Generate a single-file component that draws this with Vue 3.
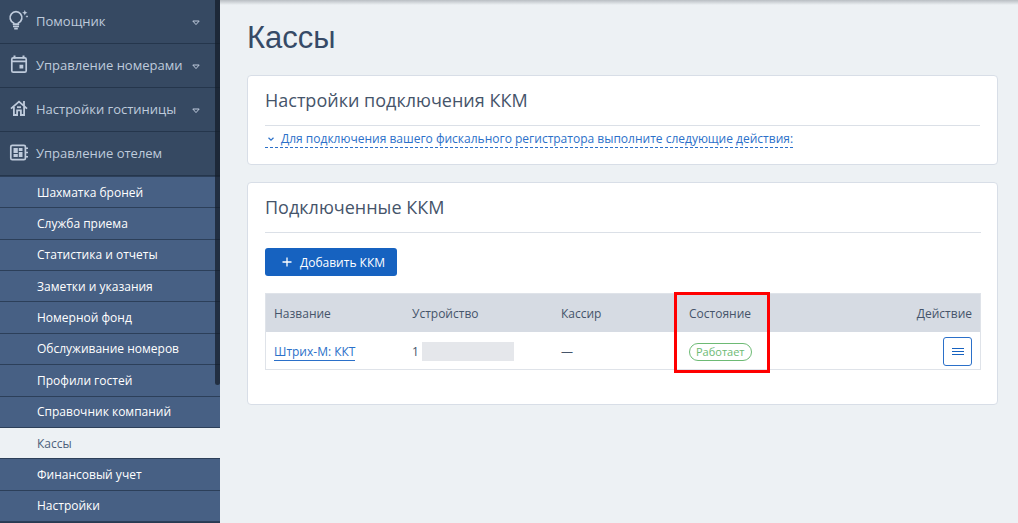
<script setup>
const sections = [
  { icon: 'bulb', label: 'Помощник', arrow: true },
  { icon: 'calendar', label: 'Управление номерами', arrow: true },
  { icon: 'house', label: 'Настройки гостиницы', arrow: true },
  { icon: 'board', label: 'Управление отелем', arrow: false },
]
const items = [
  'Шахматка броней',
  'Служба приема',
  'Статистика и отчеты',
  'Заметки и указания',
  'Номерной фонд',
  'Обслуживание номеров',
  'Профили гостей',
  'Справочник компаний',
  'Кассы',
  'Финансовый учет',
  'Настройки',
]
const current = 'Кассы'
</script>

<template>
  <div class="app">
    <nav class="sidebar">
      <button v-for="s in sections" :key="s.label" class="section" type="button">
        <svg class="icon" viewBox="0 0 22 22" aria-hidden="true">
          <g v-if="s.icon === 'bulb'" fill="none" stroke="currentColor" stroke-width="1.7">
            <path d="M7.600 14.200v-1.200a5.900 5.900 0 1 1 4.800 0v1.200z" />
            <path d="M7 16.400h6M8.200 18.600h3.600" />
            <path d="M18.800 0l.8 1.900 1.900.8-1.900.8-.8 1.900-.8-1.900-1.900-.8 1.900-.8zM21 5l.4 1.100 1.100.4-1.100.4-.4 1.100-.4-1.100-1.100-.4 1.100-.4z" fill="currentColor" stroke="none" />
          </g>
          <g v-else-if="s.icon === 'calendar'">
            <rect x="5.800" y="3.800" width="14.400" height="14.400" rx="1.500" fill="none" stroke="currentColor" stroke-width="1.700" />
            <path d="M5.500 6.500h15v1.700h-15zM7.500 1.500h2v3h-2zM16.500 1.500h2v3h-2zM13.500 10.800h3.800v3.800h-3.800z" fill="currentColor" />
          </g>
          <g v-else-if="s.icon === 'house'" fill="none" stroke="currentColor" stroke-width="1.800">
            <path d="M5 10.700 13 3.600l8 7.100" />
            <path d="M7.900 9v8h3.200v-4.700h3.800V17h3.200V9M18 8.500V3" />
            <path d="M11 9.200h4" />
          </g>
          <g v-else>
            <rect x="4.800" y="3.300" width="14.600" height="14.400" rx="1.500" fill="none" stroke="currentColor" stroke-width="1.700" />
            <path d="M7.500 6h4.300v5H7.500zM7.500 12h4.300v3H7.500zM12.800 6h3.700v3h-3.700zM12.800 10h3.700v5h-3.700zM19.500 5.500H22V7h-2.500zM19.500 9.700H22v1.500h-2.500zM19.500 14H22v1.500h-2.500z" fill="currentColor" />
          </g>
        </svg>
        <span class="section-label">{{ s.label }}</span>
        <svg v-if="s.arrow" class="arrow" viewBox="0 0 8 6" aria-hidden="true">
          <path d="M.8 1h6.400L4 4.600z" fill="none" stroke="currentColor" stroke-width="1" />
        </svg>
      </button>
      <ul class="menu">
        <li v-for="item in items" :key="item">
          <a href="#" :class="{ active: item === current }">{{ item }}</a>
        </li>
      </ul>
      <div class="scrollbar"></div>
    </nav>

    <main class="content">
      <h1>Кассы</h1>

      <section class="card settings">
        <h2>Настройки подключения ККМ</h2>
        <a class="toggle" href="#">
          <svg class="chevron" viewBox="0 0 8 8" aria-hidden="true">
            <path d="M1.500 2.800 4 5.200l2.500-2.400" fill="none" stroke="currentColor" stroke-width="1.200" />
          </svg>
          <span>Для подключения вашего фискального регистратора выполните следующие действия:</span>
        </a>
      </section>

      <section class="card connected">
        <h2>Подключенные ККМ</h2>
        <button class="add" type="button">
          <svg class="plus" viewBox="0 0 10 10" aria-hidden="true">
            <path d="M5 .5v9M.5 5h9" stroke="currentColor" stroke-width="1.300" />
          </svg>
          Добавить ККМ
        </button>
        <table>
          <thead>
            <tr>
              <th class="name">Название</th>
              <th class="device">Устройство</th>
              <th class="cashier">Кассир</th>
              <th class="state">Состояние</th>
              <th class="action">Действие</th>
            </tr>
          </thead>
          <tbody>
            <tr>
              <td><a class="kkm" href="#">Штрих-М: ККТ</a></td>
              <td><span class="device-id">1 <span class="mask"></span></span></td>
              <td>—</td>
              <td><span class="badge">Работает</span></td>
              <td class="action">
                <button class="more" type="button" aria-label="Действие">
                  <svg viewBox="0 0 12 10" aria-hidden="true">
                    <path d="M0 1.500h12M0 4.500h12M0 7.500h12" stroke="currentColor" stroke-width="1" />
                  </svg>
                </button>
              </td>
            </tr>
          </tbody>
        </table>
      </section>
    </main>
  </div>
</template>

<style>
body {
  background: #edf1f4;
}
</style>

<style scoped>
* {
  box-sizing: border-box;
}
.app {
  display: flex;
  min-height: 100vh;
  font-family: "Open Sans", "Noto Sans", sans-serif;
  font-size: 12px;
  color: #45546a;
  background: #edf1f4;
}
button {
  font: inherit;
  cursor: pointer;
}
.sidebar {
  position: relative;
  flex: none;
  display: flex;
  flex-direction: column;
  width: 220px;
  padding-bottom: 1px;
  background: #283a52;
}
.section {
  display: flex;
  align-items: center;
  height: 44px;
  padding: 0 20px 2px 6px;
  border: 0;
  border-bottom: 1px solid #25364c;
  background: #364962;
  color: #bfcbdc;
  font-size: 13px;
  text-align: left;
}
.icon {
  flex: none;
  width: 22px;
  height: 22px;
  margin-right: 8px;
}
.section-label {
  flex: 1;
  white-space: nowrap;
}
.arrow {
  flex: none;
  width: 8px;
  height: 6px;
  margin-top: 4px;
}
.menu {
  flex: 1;
  display: grid;
  grid-auto-rows: 1fr;
  margin: 0;
  padding: 0;
  border-top: 1px solid #2c3f59;
  list-style: none;
}
.menu li {
  display: grid;
}
.menu a {
  display: flex;
  align-items: center;
  min-height: 31px;
  padding-left: 37px;
  border-bottom: 1px solid #2c3f59;
  background: #476084;
  color: #fff;
  text-decoration: none;
}
.menu a.active {
  background: #edf1f4;
  color: #4c5f7b;
}
.scrollbar {
  position: absolute;
  top: 0;
  right: 0;
  width: 5px;
  height: 385px;
  border-radius: 0 0 3px 3px;
  background: rgba(19, 27, 39, 0.7);
}
.content {
  flex: 1;
  min-width: 0;
  padding: 18px 20px 20px 27px;
  background: linear-gradient(#b9bec3, #edf1f4 5px);
}
h1 {
  margin: 0 0 17px;
  font-family: "Liberation Sans", Arial, sans-serif;
  font-size: 31px;
  font-weight: 400;
  line-height: 40px;
  color: #364a66;
}
.card {
  padding: 0 17px;
  border: 1px solid #d8dee7;
  border-radius: 4px;
  background: #fff;
}
.settings {
  margin-bottom: 17px;
  padding-bottom: 16px;
}
.connected {
  padding-right: 16px;
  padding-bottom: 34px;
}
h2 {
  margin: 0;
  padding: 12px 0;
  border-bottom: 1px solid #dbe0e7;
  font-size: 18px;
  font-weight: 400;
  line-height: 25px;
}
.toggle {
  display: inline-flex;
  align-items: center;
  margin-top: 4px;
  border-bottom: 1px dashed #2b70c9;
  color: #2b70c9;
  line-height: 17px;
  text-decoration: none;
  vertical-align: top;
}
.chevron {
  width: 8px;
  height: 8px;
  margin: 0 6px 0 2px;
}
.add {
  display: flex;
  align-items: center;
  height: 28px;
  margin: 15px 0 17px;
  padding: 0 12px 0 17px;
  border: 0;
  border-radius: 3px;
  background: #1662c0;
  color: #fff;
}
.plus {
  width: 10px;
  height: 10px;
  margin-right: 8px;
}
table {
  width: 100%;
  border: 1px solid #dfe3e9;
  border-spacing: 0;
  table-layout: fixed;
}
th,
td {
  height: 38px;
  padding: 0 8px;
  font-weight: 400;
  text-align: left;
}
td {
  height: 37px;
  padding-top: 2px;
}
th {
  background: #d6dbe3;
}
.name {
  width: 138px;
}
.device {
  width: 149px;
}
.cashier {
  width: 128px;
}
.state {
  position: relative;
}
.state::after {
  content: "";
  position: absolute;
  top: -2px;
  left: -7px;
  box-sizing: border-box;
  width: 96px;
  height: 81px;
  border: 3px solid #f00;
}
.kkm {
  border-bottom: 1px solid #2b70c9;
  color: #2b70c9;
  text-decoration: none;
}
.device-id {
  display: flex;
  align-items: center;
  gap: 3px;
}
.mask {
  width: 92px;
  height: 19px;
  background: #e5e7eb;
}
.badge {
  display: inline-block;
  padding: 0 6px;
  border: 1px solid #6dba74;
  border-radius: 9px;
  color: #6dba74;
  font-size: 11px;
  line-height: 16px;
  vertical-align: middle;
}
.action {
  text-align: right;
}
.more {
  display: inline-flex;
  align-items: center;
  justify-content: center;
  width: 29px;
  height: 29px;
  padding: 0;
  border: 1px solid #2b70c9;
  border-radius: 3px;
  background: #fff;
  color: #1662c0;
  vertical-align: middle;
}
.more svg {
  width: 12px;
  height: 10px;
}
</style>
